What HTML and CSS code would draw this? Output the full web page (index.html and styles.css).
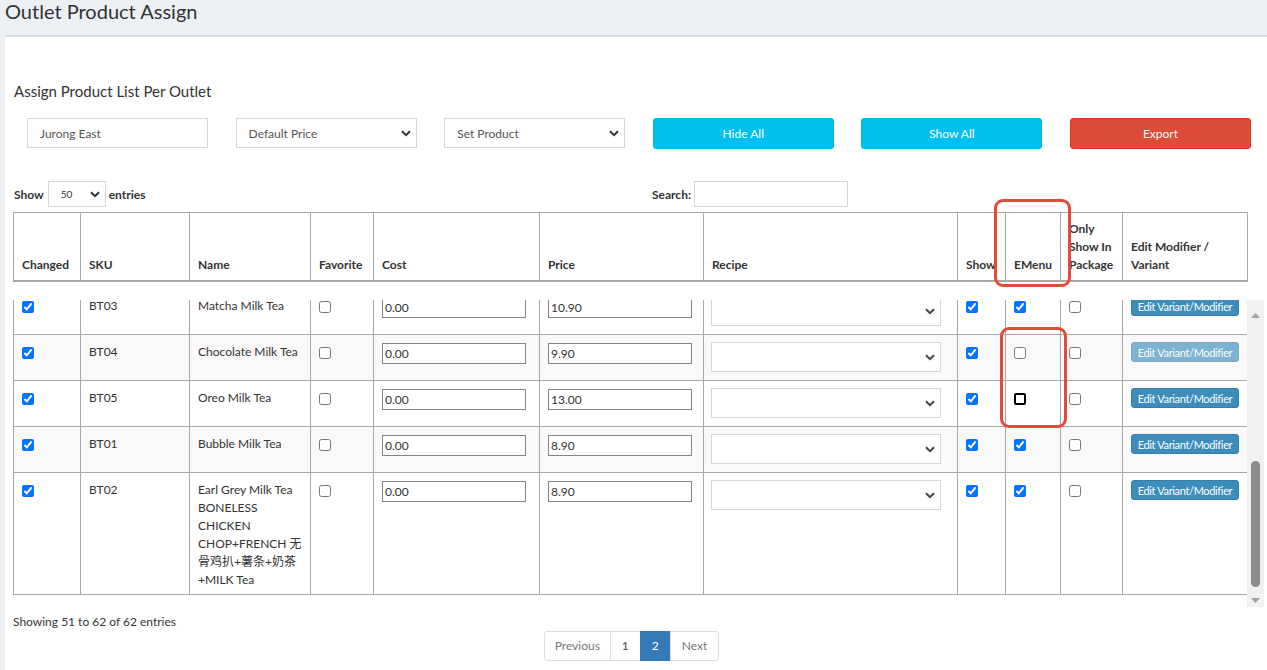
FILE: index.html
```html
<!DOCTYPE html>
<html>
<head>
<meta charset="utf-8">
<title>Outlet Product Assign</title>
<link rel="stylesheet" href="styles.css">
</head>
<body>
<header class="page-head"><h1>Outlet Product Assign</h1></header>
<main class="panel">
  <h2 class="panel-title">Assign Product List Per Outlet</h2>
  <div class="controls">
    <div class="field">Jurong East</div>
    <div class="field"><span>Default Price</span><svg class="chev" width="10" height="7" viewBox="0 0 10 7"><path d="M1 1.2 5 5.2 9 1.2" fill="none" stroke="#333" stroke-width="2"/></svg></div>
    <div class="field"><span>Set Product</span><svg class="chev" width="10" height="7" viewBox="0 0 10 7"><path d="M1 1.2 5 5.2 9 1.2" fill="none" stroke="#333" stroke-width="2"/></svg></div>
    <button class="btn btn-info">Hide All</button>
    <button class="btn btn-info">Show All</button>
    <button class="btn btn-danger">Export</button>
  </div>
  <div class="dt-top">
    <div class="dt-length"><b>Show</b><div class="len-select"><span>50</span><svg class="chev" width="10" height="7" viewBox="0 0 10 7"><path d="M1 1.2 5 5.2 9 1.2" fill="none" stroke="#333" stroke-width="2"/></svg></div><b>entries</b></div>
    <div class="dt-search"><b>Search:</b><div class="search-box"></div></div>
  </div>
  <div class="dt-wrap">
    <table class="grid head">
      <colgroup><col class="c1"><col class="c2"><col class="c3"><col class="c4"><col class="c5"><col class="c6"><col class="c7"><col class="c8"><col class="c9"><col class="c10"><col class="c11"></colgroup>
      <thead>
        <tr>
          <th>Changed</th><th>SKU</th><th>Name</th><th>Favorite</th><th>Cost</th><th>Price</th><th>Recipe</th><th class="nowrap">Show</th><th>EMenu</th><th>Only<br>Show In<br>Package</th><th>Edit Modifier /<br>Variant</th>
        </tr>
      </thead>
    </table>
    <div class="dt-body">
      <div class="clip">
        <table class="grid body">
          <colgroup><col class="c1"><col class="c2"><col class="c3"><col class="c4"><col class="c5"><col class="c6"><col class="c7"><col class="c8"><col class="c9"><col class="c10"><col class="c11"></colgroup>
          <tbody>
            <tr>
              <td><input class="cb" type="checkbox" checked></td><td>BT03</td><td>Matcha Milk Tea</td><td><input class="cb" type="checkbox"></td>
              <td><input class="num" type="text" value="0.00"></td><td><input class="num" type="text" value="10.90"></td>
              <td><div class="recipe"><svg class="chev" width="10" height="7" viewBox="0 0 10 7"><path d="M1 1.2 5 5.2 9 1.2" fill="none" stroke="#444" stroke-width="2"/></svg></div></td>
              <td><input class="cb" type="checkbox" checked></td><td><input class="cb" type="checkbox" checked></td><td><input class="cb" type="checkbox"></td>
              <td><button class="edit">Edit Variant/Modifier</button></td>
            </tr>
            <tr class="odd">
              <td><input class="cb" type="checkbox" checked></td><td>BT04</td><td>Chocolate Milk Tea</td><td><input class="cb" type="checkbox"></td>
              <td><input class="num" type="text" value="0.00"></td><td><input class="num" type="text" value="9.90"></td>
              <td><div class="recipe"><svg class="chev" width="10" height="7" viewBox="0 0 10 7"><path d="M1 1.2 5 5.2 9 1.2" fill="none" stroke="#444" stroke-width="2"/></svg></div></td>
              <td><input class="cb" type="checkbox" checked></td><td><input class="cb" type="checkbox"></td><td><input class="cb" type="checkbox"></td>
              <td><button class="edit disabled">Edit Variant/Modifier</button></td>
            </tr>
            <tr>
              <td><input class="cb" type="checkbox" checked></td><td>BT05</td><td>Oreo Milk Tea</td><td><input class="cb" type="checkbox"></td>
              <td><input class="num" type="text" value="0.00"></td><td><input class="num" type="text" value="13.00"></td>
              <td><div class="recipe"><svg class="chev" width="10" height="7" viewBox="0 0 10 7"><path d="M1 1.2 5 5.2 9 1.2" fill="none" stroke="#444" stroke-width="2"/></svg></div></td>
              <td><input class="cb" type="checkbox" checked></td><td><input class="cb focus" type="checkbox"></td><td><input class="cb" type="checkbox"></td>
              <td><button class="edit">Edit Variant/Modifier</button></td>
            </tr>
            <tr class="odd">
              <td><input class="cb" type="checkbox" checked></td><td>BT01</td><td>Bubble Milk Tea</td><td><input class="cb" type="checkbox"></td>
              <td><input class="num" type="text" value="0.00"></td><td><input class="num" type="text" value="8.90"></td>
              <td><div class="recipe"><svg class="chev" width="10" height="7" viewBox="0 0 10 7"><path d="M1 1.2 5 5.2 9 1.2" fill="none" stroke="#444" stroke-width="2"/></svg></div></td>
              <td><input class="cb" type="checkbox" checked></td><td><input class="cb" type="checkbox" checked></td><td><input class="cb" type="checkbox"></td>
              <td><button class="edit">Edit Variant/Modifier</button></td>
            </tr>
            <tr>
              <td><input class="cb" type="checkbox" checked></td><td>BT02</td><td>Earl Grey Milk Tea<br>BONELESS<br>CHICKEN<br>CHOP+FRENCH 无<br>骨鸡扒+薯条+奶茶<br>+MILK Tea</td><td><input class="cb" type="checkbox"></td>
              <td><input class="num" type="text" value="0.00"></td><td><input class="num" type="text" value="8.90"></td>
              <td><div class="recipe"><svg class="chev" width="10" height="7" viewBox="0 0 10 7"><path d="M1 1.2 5 5.2 9 1.2" fill="none" stroke="#444" stroke-width="2"/></svg></div></td>
              <td><input class="cb" type="checkbox" checked></td><td><input class="cb" type="checkbox" checked></td><td><input class="cb" type="checkbox"></td>
              <td><button class="edit">Edit Variant/Modifier</button></td>
            </tr>
          </tbody>
        </table>
      </div>
      <div class="vscroll">
        <svg width="9" height="5" viewBox="0 0 9 5"><path d="M0 5 4.5 0 9 5Z" fill="#a3a3a3"/></svg>
        <div class="thumb"></div>
        <svg class="down" width="9" height="5" viewBox="0 0 9 5"><path d="M0 0 4.5 5 9 0Z" fill="#a3a3a3"/></svg>
      </div>
    </div>
    <div class="dt-info">Showing 51 to 62 of 62 entries</div>
    <div class="pager">
      <a class="pg first">Previous</a><a class="pg num1">1</a><a class="pg active">2</a><a class="pg last">Next</a>
    </div>
  </div>
</main>
<div class="mark mark-head"></div>
<div class="mark mark-rows"></div>
</body>
</html>
```
FILE: styles.css
```css
* { box-sizing: border-box; }
body {
  margin: 0;
  background: #ecf0f5;
  font-family: Lato, "Noto Sans CJK SC", sans-serif;
  font-size: 12px;
  color: #333;
}
.page-head { height: 35px; padding-left: 5px; }
.page-head h1 {
  margin: 0;
  font-size: 20px;
  font-weight: 400;
  line-height: 22px;
  color: #333;
}
.panel {
  margin-left: 5px;
  background: #fff;
  border-top: 2px solid #d6dbe3;
  padding: 0 0 0 9px;
  min-height: 635px;
}
.panel-title {
  margin: 0;
  padding-top: 44px;
  font-size: 15px;
  font-weight: 400;
  line-height: 20px;
}
.controls {
  display: grid;
  grid-template-columns: repeat(6, 181px);
  column-gap: 27.6px;
  margin: 17px 0 0 13px;
}
.field {
  height: 30px;
  border: 1px solid #d2d6de;
  display: flex;
  align-items: center;
  justify-content: space-between;
  padding: 0 5px 0 12px;
  color: #555;
  font-size: 12px;
}
.btn {
  height: 31px;
  border-radius: 3px;
  color: #fff;
  font: 12px Lato, sans-serif;
  border: 1px solid;
  padding: 0;
}
.btn-info { background: #00c0ef; border-color: #00b4e0; }
.btn-danger { background: #dd4b39; border-color: #d73925; }
.dt-top {
  display: flex;
  align-items: center;
  height: 26px;
  margin-top: 32px;
}
.dt-length {
  width: 638px;
  display: flex;
  align-items: center;
}
.len-select {
  width: 58px;
  height: 26px;
  border: 1px solid #d2d6de;
  margin: 0 3px 0 4px;
  display: flex;
  align-items: center;
  justify-content: space-between;
  padding: 0 5px 0 12px;
  font-size: 10px;
}
.dt-search { display: flex; align-items: center; }
.search-box {
  width: 154px;
  height: 26px;
  border: 1px solid #cfd3da;
  margin-left: 3px;
}
.dt-wrap { margin: 5px 0 0 -1px; width: 1251px; }
table.grid {
  border-collapse: collapse;
  table-layout: fixed;
  width: 1234px;
}
.c1 { width: 67px; } .c2 { width: 109px; } .c3 { width: 121px; } .c4 { width: 63px; }
.c5 { width: 166px; } .c6 { width: 164px; } .c7 { width: 254px; } .c8 { width: 48px; }
.c9 { width: 55px; } .c10 { width: 62px; } .c11 { width: 125px; }
.grid th, .grid td {
  border: 1px solid #a8a8a8;
  padding: 8px;
  text-align: left;
  line-height: 18px;
}
.grid th {
  vertical-align: bottom;
  font-weight: 700;
  padding: 7px 8px 6px;
  border-bottom-width: 2px;
}
.nowrap { white-space: nowrap; overflow: visible; }
.grid td { vertical-align: top; padding: 8px 8px 5px; }
.grid tbody tr { height: 46px; }
tr.odd { background: #f9f9f9; }
.dt-body {
  display: flex;
  align-items: flex-start;
  margin-top: 18px;
}
.clip {
  flex: none;
  width: 1234px;
  height: 295px;
  overflow: hidden;
  display: flex;
  flex-direction: column;
  justify-content: flex-end;
}
.clip table { flex: none; }
.vscroll {
  flex: none;
  width: 17px;
  height: 307px;
  background: #f1f1f1;
  display: flex;
  flex-direction: column;
  align-items: center;
  padding: 13px 0 4px;
}
.thumb {
  width: 9px;
  height: 126px;
  border-radius: 5px;
  background: #8c8c8c;
  margin-top: auto;
}
.vscroll .down { margin-top: 11px; }
.cb { display: block; margin: 4px 0 0; width: 12px; height: 12px; }
.cb.focus {
  appearance: none;
  -webkit-appearance: none;
  border: 2px solid #000;
  border-radius: 2px;
  background: #fff;
}
.num {
  display: block;
  width: 144px;
  height: 21px;
  border: 1px solid #858585;
  padding: 1px 2px;
  font: 12px Lato, sans-serif;
  color: #333;
  background: #fff;
}
.recipe {
  width: 230px;
  height: 30px;
  margin: -1px 0 0 -1px;
  border: 1px solid #d2d6de;
  background: #fff;
  display: flex;
  justify-content: flex-end;
  align-items: center;
  padding-right: 5px;
}
.edit {
  display: block;
  width: 108px;
  height: 20px;
  margin: -1px 0 0 0;
  background: #3c8dbc;
  border: 1px solid #367fa9;
  border-radius: 3px;
  color: #fff;
  font: 11px Lato, sans-serif;
  letter-spacing: -0.35px;
  padding: 0;
  white-space: nowrap;
}
.edit.disabled { opacity: 0.65; }
.dt-info { margin-top: 6px; line-height: 18px; }
.pager {
  width: 1238px;
  display: flex;
  justify-content: center;
}
.pg {
  display: block;
  height: 30px;
  line-height: 28px;
  padding: 0 11px;
  border: 1px solid #ddd;
  margin-left: -1px;
  color: #777;
  background: #fff;
  font-size: 12px;
}
.pg.first { padding: 0 10px; }
.pg.num1 { color: #444; }
.pg.first { border-radius: 3px 0 0 3px; }
.pg.last { border-radius: 0 3px 3px 0; }
.pg.active { background: #337ab7; border-color: #337ab7; color: #fff; }
.mark {
  position: absolute;
  border: 3px solid #e24b37;
  border-radius: 9px;
  pointer-events: none;
}
.mark-head { left: 994px; top: 199px; width: 77px; height: 88px; }
.mark-rows { left: 1000px; top: 327px; width: 67px; height: 101px; }
```
